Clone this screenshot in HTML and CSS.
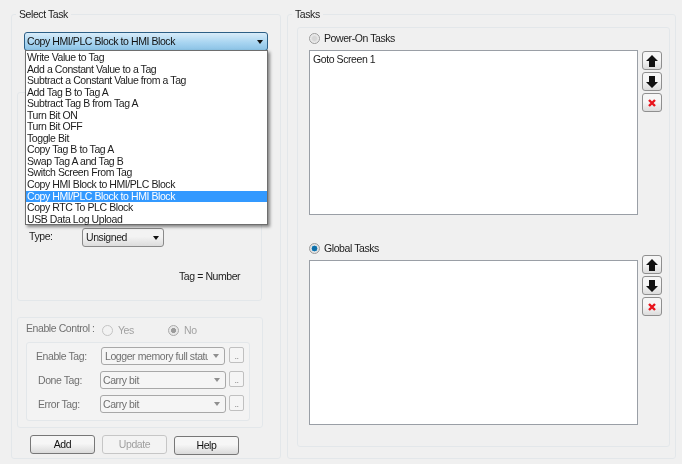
FILE: index.html
```html
<!DOCTYPE html>
<html lang="en">
<head>
<meta charset="utf-8">
<title>Tasks</title>
<link rel="stylesheet" href="styles.css">
</head>
<body>
<main class="window">
  <fieldset class="group group-left">
    <legend>Select Task</legend>
    <div class="task-combo-wrap">
      <div class="task-combo"><span>Copy HMI/PLC Block to HMI Block</span><i class="caret dark"></i></div>
      <ul class="task-list">
        <li>Write Value to Tag</li>
        <li>Add a Constant Value to a Tag</li>
        <li>Subtract a Constant Value from a Tag</li>
        <li>Add Tag B to Tag A</li>
        <li>Subtract Tag B from Tag A</li>
        <li>Turn Bit ON</li>
        <li>Turn Bit OFF</li>
        <li>Toggle Bit</li>
        <li>Copy Tag B to Tag A</li>
        <li>Swap Tag A and Tag B</li>
        <li>Switch Screen From Tag</li>
        <li>Copy HMI Block to HMI/PLC Block</li>
        <li class="selected">Copy HMI/PLC Block to HMI Block</li>
        <li>Copy RTC To PLC Block</li>
        <li>USB Data Log Upload</li>
      </ul>
    </div>
    <section class="panel params">
      <div class="type-row">
        <span class="type-label">Type:</span>
        <div class="type-select"><span>Unsigned</span><i class="caret dark"></i></div>
      </div>
      <p class="formula">Tag = Number</p>
    </section>
    <section class="panel enable">
      <div class="enable-row">
        <span class="enable-label">Enable Control :</span>
        <span class="radio disabled yes"></span><span class="radio-text yes-text">Yes</span>
        <span class="radio disabled checked-gray"></span><span class="radio-text">No</span>
      </div>
      <div class="panel tags">
        <div class="tag-row first">
          <span class="tag-label l1">Enable Tag:</span>
          <div class="tag-select narrow"><span class="clip">Logger memory full status</span><i class="caret"></i></div>
          <div class="dots">..</div>
        </div>
        <div class="tag-row">
          <span class="tag-label l2">Done Tag:</span>
          <div class="tag-select"><span>Carry bit</span><i class="caret"></i></div>
          <div class="dots">..</div>
        </div>
        <div class="tag-row">
          <span class="tag-label l2">Error Tag:</span>
          <div class="tag-select"><span>Carry bit</span><i class="caret"></i></div>
          <div class="dots">..</div>
        </div>
      </div>
    </section>
    <div class="actions">
      <button class="btn">Add</button>
      <button class="btn off">Update</button>
      <button class="btn low">Help</button>
    </div>
  </fieldset>

  <fieldset class="group group-right">
    <legend>Tasks</legend>
    <div class="panel tasks">
      <section class="task-block">
        <label class="task-head"><span class="radio"></span>Power-On Tasks</label>
        <div class="listbox">Goto Screen 1</div>
        <div class="side s1">
          <button class="icon-btn"><svg width="14" height="14" viewBox="0 0 14 14"><path d="M7 1 13 7H10V13H4V7H1Z" fill="#111"/></svg></button>
          <button class="icon-btn"><svg width="14" height="14" viewBox="0 0 14 14"><path d="M7 13 13 7H10V1H4V7H1Z" fill="#111"/></svg></button>
          <button class="icon-btn"><svg width="14" height="14" viewBox="0 0 14 14"><path d="M4 4 10 10M10 4 4 10" stroke="#e8131b" stroke-width="2.4"/></svg></button>
        </div>
      </section>
      <section class="task-block second">
        <label class="task-head"><span class="radio on"></span>Global Tasks</label>
        <div class="listbox"></div>
        <div class="side s2">
          <button class="icon-btn"><svg width="14" height="14" viewBox="0 0 14 14"><path d="M7 1 13 7H10V13H4V7H1Z" fill="#111"/></svg></button>
          <button class="icon-btn"><svg width="14" height="14" viewBox="0 0 14 14"><path d="M7 13 13 7H10V1H4V7H1Z" fill="#111"/></svg></button>
          <button class="icon-btn"><svg width="14" height="14" viewBox="0 0 14 14"><path d="M4 4 10 10M10 4 4 10" stroke="#e8131b" stroke-width="2.4"/></svg></button>
        </div>
      </section>
    </div>
  </fieldset>
</main>
</body>
</html>
```
FILE: styles.css
```css
* { box-sizing: border-box; }
html, body { margin: 0; height: 100%; }
body {
  background: #f0f0f0;
  font: 10.5px/13px "Liberation Sans", Arial, sans-serif;
  letter-spacing: -0.42px;
  color: #1c1c1c;
  overflow: hidden;
}
.window {
  display: flex;
  gap: 6px;
  padding: 8px 0 0 11px;
  width: 682px;
  height: 464px;
  filter: blur(0.3px);
}
.group {
  margin: 0;
  padding: 0;
  border: 1px solid #e3e7ea;
  border-radius: 3px;
  height: 451px;
  min-width: 0;
}
.group legend {
  padding: 0 3px;
  line-height: 13px;
}
.group-left legend { margin-left: -1px; }
.group-right legend { margin-left: -5px; }
.group-left { width: 270px; padding: 0 0 0 5px; }
.group-right { width: 389px; padding: 0 0 0 9px; }
.panel {
  border: 1px solid #e3e7ea;
  border-radius: 3px;
}

/* main combo */
.task-combo-wrap { position: relative; margin: 11px 0 0 7px; width: 244px; height: 18px; }
.task-combo {
  display: flex;
  align-items: center;
  justify-content: space-between;
  height: 19px;
  padding: 0 4px 0 2px;
  border: 1px solid #2c5f86;
  border-radius: 3px;
  background: linear-gradient(#d8ecf9, #a9d5f1 55%, #8cc3e6);
  color: #111;
}
.caret {
  width: 0; height: 0;
  border: 3.5px solid transparent;
  border-top: 4px solid #8f8f8f;
  border-bottom: 0;
  flex: none;
}
.caret.dark { border-top-color: #111; }
.task-list {
  position: absolute;
  z-index: 2;
  left: 1px;
  top: 18px;
  width: 243px;
  height: 175px;
  margin: 0;
  padding: 1px 0 0;
  list-style: none;
  background: #fff;
  border: 1px solid #6e6e6e;
  box-shadow: 2px 2px 3px rgba(0, 0, 0, .45);
}
.task-list li { height: 11.55px; line-height: 11.55px; padding-left: 1px; white-space: nowrap; }
.task-list .selected { background: #3399ff; color: #fff; }

/* params panel */
.params {
  margin-top: 42px;
  width: 245px;
  height: 209px;
  padding: 135px 0 0 11px;
}
.type-row { display: flex; align-items: flex-start; }
.type-label { width: 53px; padding-top: 2px; }
.type-select {
  display: flex;
  align-items: center;
  justify-content: space-between;
  width: 82px;
  height: 19px;
  padding: 0 4px 0 3px;
  border: 1px solid #8a8a8a;
  border-radius: 3px;
  background: linear-gradient(#f3f3f3 45%, #dcdcdc);
}
.formula { margin: 23px 0 0 150px; }

/* enable panel */
.enable {
  margin-top: 16px;
  width: 246px;
  height: 111px;
  padding: 3px 0 0 8px;
  background: #f1f1f1;
  color: #707070;
}
.enable-row { display: flex; align-items: center; height: 14px; }
.enable-label { width: 76px; }
.radio {
  flex: none;
  display: inline-block;
  width: 11px; height: 11px;
  border-radius: 50%;
  border: 1px solid #9a9a9a;
  background: radial-gradient(circle, #d6d6d6 30%, #f4f4f4 75%);
}
.radio.disabled { border-color: #c4c4c4; background: #f2f2f2; }
.radio.yes { margin-top: 4px; }
.radio.checked-gray { margin-top: 4px; border-color: #aaa; background: radial-gradient(circle, #9c9c9c 35%, #e8e8e8 45%); }
.radio.on { background: radial-gradient(circle, #0f6ea8 34%, #3a9ad0 44%, #e2e2e2 50%); }
.radio-text { margin: 4px 0 0 5px; color: #a2a2a2; }
.yes-text { width: 16px; margin-right: 34px; }
.tags {
  margin: 7px 0 0;
  width: 224px;
  height: 79px;
  padding: 4px 0 0;
  background: #f3f3f3;
}
.tag-row { display: flex; align-items: flex-start; height: 24px; }
.tag-label { padding-top: 3px; }
.l1 { width: 74px; padding-left: 9px; }
.l2 { width: 73px; padding-left: 11px; }
.tag-select {
  display: flex;
  align-items: center;
  justify-content: space-between;
  width: 126px;
  height: 18px;
  padding: 0 5px 0 2px;
  border: 1px solid #a8a8a8;
  border-radius: 3px;
  background: #f5f5f5;
}
.narrow { width: 124px; padding-left: 3px; }
.clip { width: 103px; overflow: hidden; white-space: nowrap; }
.dots {
  width: 15px;
  height: 16px;
  margin-left: 3px;
  border: 1px solid #c0c0c0;
  border-radius: 2px;
  background: #f5f5f5;
  font-size: 9px;
  line-height: 17px;
  text-align: center;
  color: #888;
}
.first .dots { margin-left: 4px; }
.actions { display: flex; gap: 7px; padding: 7px 0 0 13px; }
.btn {
  width: 65px;
  height: 19px;
  padding: 0;
  border: 1px solid #777;
  border-radius: 3px;
  background: linear-gradient(#f6f6f6 45%, #dadada);
  font: inherit;
  letter-spacing: inherit;
  color: #111;
}
.btn.off { border-color: #c6c6c6; background: #f3f3f3; color: #a0a0a0; }
.btn.low { margin-top: 1px; }

/* tasks */
.tasks { margin-top: 6px; width: 373px; height: 420px; padding: 3px 0 0 11px; }
.task-block {
  display: grid;
  grid-template-columns: 329px 20px;
  column-gap: 4px;
  grid-template-rows: 14px auto;
  row-gap: 5px;
}
.task-block.second { margin-top: 26px; }
.task-head { display: flex; align-items: center; gap: 4px; grid-column: 1; color: #1c1c1c; }
.listbox {
  grid-column: 1;
  height: 165px;
  padding: 2px 3px;
  background: #fff;
  border: 1px solid #9a9fa6;
  line-height: 13px;
}
.side { grid-column: 2; grid-row: 1 / 3; display: flex; flex-direction: column; gap: 2px; }
.s1 { margin-top: 20px; }
.s2 { margin-top: 14px; }
.icon-btn {
  display: flex;
  align-items: center;
  justify-content: center;
  width: 20px;
  height: 19px;
  padding: 0;
  border: 1px solid #8f8f8f;
  border-radius: 3px;
  background: linear-gradient(#f6f6f6 45%, #dcdcdc);
}
```
